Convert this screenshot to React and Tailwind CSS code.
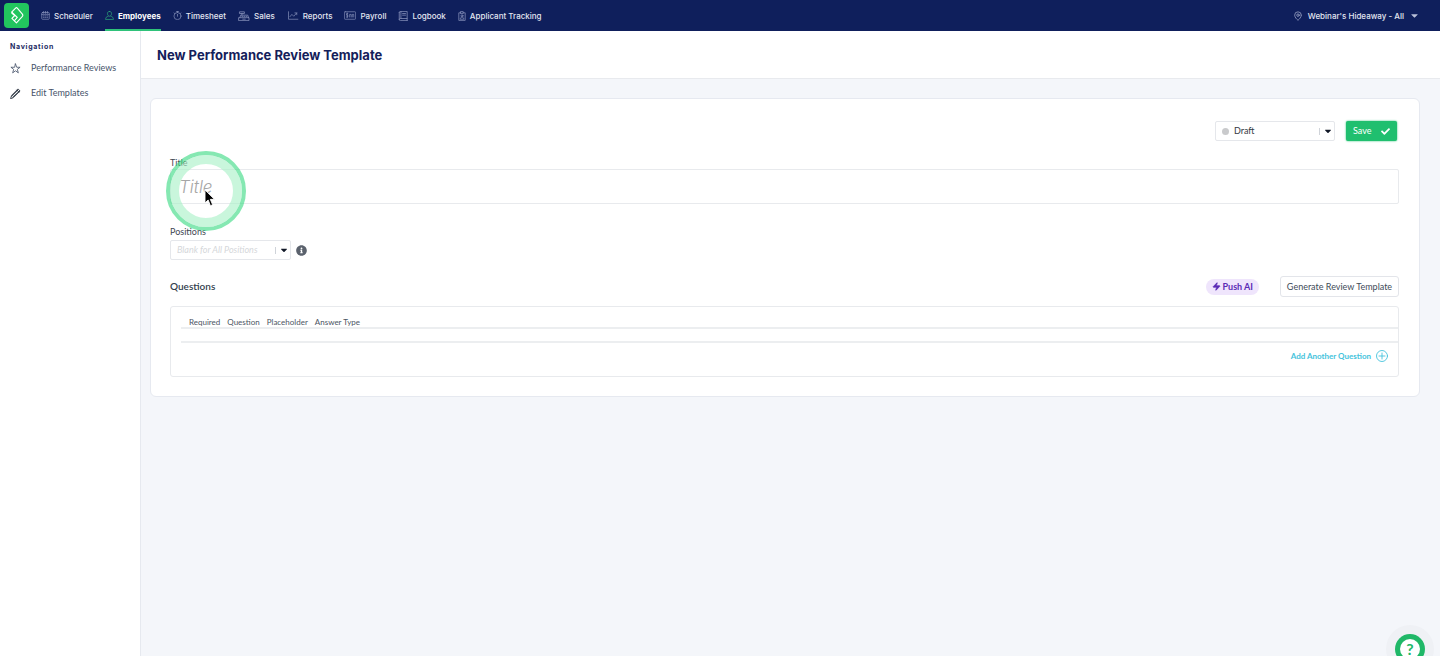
import React from "react";
import { MapPin, Zap } from "lucide-react";
import { FaCaretDown, FaCheck, FaInfoCircle } from "react-icons/fa";

const iconProps = {
  viewBox: "0 0 24 24",
  fill: "none",
  stroke: "currentColor",
  strokeWidth: 1.8,
  strokeLinecap: "round",
  strokeLinejoin: "round",
  "aria-hidden": true,
};

const CalendarIcon = () => (
  <svg {...iconProps} className="size-[9px]">
    <rect x="2" y="4" width="20" height="18" rx="2" />
    <path d="M2 9h20M7 1v5M12 1v5M17 1v5M6 13h2M11 13h2M16 13h2M6 17h2M11 17h2M16 17h2" />
  </svg>
);

const PersonIcon = () => (
  <svg {...iconProps} className="size-[9px] text-[#2fae7b]">
    <path d="M12 1c-3.500 0-5.500 2.500-5.500 6S9 14 12 14s5.500-3.500 5.500-7S15.500 1 12 1Z" />
    <path d="M8 14c-4 1-6 3-6.500 8.500h21C22 17 20 15 16 14" />
  </svg>
);

const StopwatchIcon = () => (
  <svg {...iconProps} className="size-[9px]">
    <circle cx="12" cy="13.500" r="9.500" />
    <path d="M12 4V1M9 1h6M12 9v5M3 5l2 2M21 5l-2 2" />
  </svg>
);

const RegisterIcon = () => (
  <svg {...iconProps} viewBox="0 0 28 24" className="h-[10px] w-[12px]">
    <path d="M2 16h24v7H2zM4 16l2-6h17l2 6M9 10V6M4 2h11v4H4zM9 13h2M14 13h2M19 13h2M11 19.500h6" />
  </svg>
);

const ChartIcon = () => (
  <svg {...iconProps} viewBox="0 0 28 24" className="h-[9px] w-[12px]">
    <path d="M2 2v20h25M6 15l5-6 5 5 8-9M19 5h5v5" />
  </svg>
);

const CheckIcon = () => (
  <svg {...iconProps} viewBox="0 0 32 22" className="h-[9px] w-[12px]">
    <rect x="1" y="1" width="30" height="20" rx="2" />
    <path d="M10 6H7v4h3v5H7M8.500 4v13M15 15V8h4v7M22 15V8h4v7" />
  </svg>
);

const BookIcon = () => (
  <svg {...iconProps} className="size-[10px]">
    <path d="M3 3.500C3 2 4 1 5.500 1H22v17H6c-2 0-3 1-3 2.500S4 23 6 23h16M3 3.500v17M7 1v17M11 6h7M11 10h7M22 18v5" />
  </svg>
);

const BadgeIcon = () => (
  <svg {...iconProps} viewBox="0 0 20 24" className="h-[10px] w-[8px]">
    <path d="M7 4H2v19h16V4h-5M7 1h6v5H7z" />
    <circle cx="10" cy="11.500" r="2.500" />
    <path d="M5.500 19c.5-3 2-4 4.500-4s4 1 4.500 4z" />
  </svg>
);

const StarIcon = () => (
  <svg {...iconProps} strokeLinejoin="miter" className="size-[11px]">
    <path d="m12 2 2.600 7.300H22l-6 4.600 2.200 7.600L12 17l-6.200 4.500L8 13.900 2 9.300h7.400Z" />
  </svg>
);

const PencilIcon = () => (
  <svg {...iconProps} className="size-[11px] text-[#1f2937]">
    <path d="m1.500 22.500 2-6.500L17.500 2l4.500 4.500L8 20.500ZM15 4.500 19.500 9" />
    <path d="m4 18 13-13M6 20 20 7" />
  </svg>
);

const navItems = [
  { label: "Scheduler", icon: CalendarIcon },
  { label: "Employees", icon: PersonIcon, active: true },
  { label: "Timesheet", icon: StopwatchIcon },
  { label: "Sales", icon: RegisterIcon },
  { label: "Reports", icon: ChartIcon },
  { label: "Payroll", icon: CheckIcon },
  { label: "Logbook", icon: BookIcon },
  { label: "Applicant Tracking", icon: BadgeIcon },
];

const columns = ["Required", "Question", "Placeholder", "Answer Type"];

const Logo = () => (
  <a
    href="#home"
    aria-label="Home"
    className="flex size-[25px] items-center justify-center rounded-[4px] bg-[#22c55e]"
  >
    <svg
      viewBox="0 0 24 30"
      className="h-[17px] w-[14px]"
      fill="none"
      stroke="#ffffff"
      strokeWidth="2"
      strokeLinecap="round"
      strokeLinejoin="round"
    >
      <path d="M3 8.500 9.500 2q1.500-1.500 3 0l9 10.500q1.500 2 0 4L11 28l-8-8 5-5-5-4Z" />
      <path d="m3 9 9.500 9.500L7.500 24" />
    </svg>
  </a>
);

const TopBar = () => (
  <header className="flex h-[31px] items-center justify-between bg-[#0f1f5c] pr-5 pl-1 font-['Inter',sans-serif] text-[8px] font-medium text-[#e3e6f1]">
    <div className="flex h-full items-center gap-3">
      <Logo />
      <nav className="flex h-full items-stretch gap-3">
        {navItems.map(({ label, icon: Icon, active }) => (
          <a
            key={label}
            href="#nav"
            className={
              active
                ? "flex items-center gap-1 border-y-2 border-t-transparent border-b-[#2fc27a] font-bold text-white"
                : "flex items-center gap-1"
            }
          >
            <span className="text-[#8b95bd]">
              <Icon />
            </span>
            {label}
          </a>
        ))}
      </nav>
    </div>
    <button type="button" className="flex items-center gap-[5px]">
      <MapPin className="size-[10px] text-[#a3abcb]" strokeWidth={1.8} />
      Webinar's Hideaway - All
      <FaCaretDown className="size-[11px] text-[#b9c0d8]" />
    </button>
  </header>
);

const Sidebar = () => (
  <aside className="w-[141px] shrink-0 border-r border-[#e6e9ef] bg-white pt-[11px] pl-[10px]">
    <h2 className="font-['Inter',sans-serif] text-[7px] leading-[10px] font-bold tracking-widest text-[#1d2a63]">
      Navigation
    </h2>
    <nav className="mt-[10px] flex flex-col gap-[13px] text-[9px] leading-3 text-[#46536a]">
      <a href="#reviews" className="flex items-center gap-[10px]">
        <StarIcon />
        Performance Reviews
      </a>
      <a href="#templates" className="flex items-center gap-[10px]">
        <PencilIcon />
        Edit Templates
      </a>
    </nav>
  </aside>
);

/* Divider and caret drawn over the right end of a select */
const SelectCaret = () => (
  <span className="pointer-events-none absolute inset-y-0 right-[2px] flex items-center gap-[3px]">
    <span className="h-[7px] w-px bg-[#cfd3d9]" />
    <FaCaretDown className="size-[10px] text-[#111827]" />
  </span>
);

/* Click highlight ring with the mouse pointer on top */
const PointerHighlight = () => (
  <div className="pointer-events-none absolute -top-[18px] -left-1 flex size-20 items-center justify-center rounded-full border-4 border-[#34d97f]/60">
    <div className="size-full rounded-full border-[9px] border-[#a5f0c4]/60" />
    <svg viewBox="0 0 12 20" className="absolute top-[34px] left-[34px] h-[18px] w-[11px]">
      <path
        d="M1 1v14.500l3.500-3.300L7 18.500l2.500-1-2.600-6H11.500Z"
        fill="#000000"
        stroke="#ffffff"
        strokeWidth="1"
      />
    </svg>
  </div>
);

const TemplateForm = () => (
  <form className="rounded-md border border-[#e6e9f0] bg-white pt-[22px] pr-5 pb-[19px] pl-[19px]">
    <div className="flex items-center justify-end gap-[11px] pr-[2px]">
      <div className="relative">
        <span className="pointer-events-none absolute top-[7px] left-[7px] size-[7px] rounded-full bg-[#c9cacc]" />
        <select
          aria-label="Status"
          className="block h-5 w-[120px] appearance-none rounded-xs border border-[#e5e7eb] bg-white pl-[18px] text-[9px] leading-3 text-[#333a44]"
        >
          <option>Draft</option>
        </select>
        <SelectCaret />
      </div>
      <button
        type="button"
        className="flex h-5 w-[51px] items-center justify-between rounded-xs bg-[#20bf6f] px-[7px] text-[9px] text-white shadow-[0_0_2px_#20bf6f]"
      >
        Save
        <FaCheck className="size-[9px]" />
      </button>
    </div>

    <label
      htmlFor="title"
      className="mt-4 block text-[9px] leading-3 text-[#3f4752]"
    >
      Title
    </label>
    <div className="relative">
      <input
        id="title"
        type="text"
        placeholder="Title"
        className="block h-[35px] w-full rounded-xs border border-[#e8eaed] px-2 font-['Inter',sans-serif] text-[17px] font-light text-[#333a44] placeholder:text-[#a6a6a6] placeholder:italic"
      />
      <PointerHighlight />
    </div>

    <label
      htmlFor="positions"
      className="mt-[22px] mb-0.5 block text-[9px] leading-3 text-[#3f4752]"
    >
      Positions
    </label>
    <div className="flex items-center gap-[5px]">
      <div className="relative">
        <select
          id="positions"
          className="block h-5 w-[121px] appearance-none rounded-xs border border-[#e5e7eb] bg-white pl-[6px] text-[9px] leading-3 text-[#d5d7da] italic"
        >
          <option>Blank for All Positions</option>
        </select>
        <SelectCaret />
      </div>
      <FaInfoCircle className="size-[11px] text-[#5b626d]" />
    </div>

    <div className="mt-4 flex h-[21px] items-center justify-between">
      <h2 className="text-[10px] font-semibold text-[#333f4d]">Questions</h2>
      <div className="flex items-center gap-[21px]">
        <span className="flex h-4 items-center gap-[2px] rounded-full bg-[#efe5fc] px-[6px] text-[9px] font-bold text-[#5b2bb5]">
          <Zap className="size-[9px]" fill="currentColor" />
          Push AI
        </span>
        <button
          type="button"
          className="h-[21px] w-[119px] rounded-[3px] border border-[#e3e5ea] text-[9px] text-[#414b59]"
        >
          Generate Review Template
        </button>
      </div>
    </div>

    <section className="mt-[9px] rounded-[3px] border border-[#e8eaed] pb-[14px] pl-[10px]">
      <table className="w-full border-collapse text-left text-[8px] leading-[10px] text-[#4b5563]">
        <thead>
          <tr className="h-[21px] border-b-2 border-[#eceef0]">
            {columns.map((column) => (
              <th
                key={column}
                className="pt-[9px] pl-[7px] font-normal whitespace-nowrap first:pl-2 last:w-full"
              >
                {column}
              </th>
            ))}
          </tr>
        </thead>
        <tbody>
          <tr className="h-[14px] border-b-2 border-[#eceef0]">
            <td colSpan={columns.length} className="p-0" />
          </tr>
        </tbody>
      </table>
      <div className="mt-[7px] flex justify-end pr-[10px]">
        <button
          type="button"
          className="flex items-center gap-[5px] text-[8px] leading-3 font-bold text-[#45c3dc]"
        >
          Add Another Question
          <svg {...iconProps} className="size-3">
            <circle cx="12" cy="12" r="11" />
            <path d="M12 6v12M6 12h12" />
          </svg>
        </button>
      </div>
    </section>
  </form>
);

const HelpButton = () => (
  <div className="fixed right-[6px] -bottom-[17px] rounded-full bg-[#eff1f5] p-[9px]">
    <button
      type="button"
      aria-label="Help"
      className="flex size-[30px] items-center justify-center rounded-full bg-[#20b868]"
    >
      <span className="flex size-[20px] items-center justify-center rounded-full bg-white text-[16px] font-bold text-[#20b868]">
        ?
      </span>
    </button>
  </div>
);

const App = () => {
  return (
    <div className="flex min-h-screen flex-col bg-[#f4f6fa] font-['Lato',sans-serif]">
      <TopBar />
      <div className="flex flex-1">
        <Sidebar />
        <main className="min-w-0 flex-1">
          <div className="flex h-12 items-center border-b border-[#e8eaee] bg-white px-4 pt-0.5">
            <h1 className="font-['Inter',sans-serif] text-[13px] font-bold text-[#14205a]">
              New Performance Review Template
            </h1>
          </div>
          <div className="pt-[19px] pr-5 pl-[9px]">
            <TemplateForm />
          </div>
        </main>
      </div>
      <HelpButton />
    </div>
  );
};

export default App;
